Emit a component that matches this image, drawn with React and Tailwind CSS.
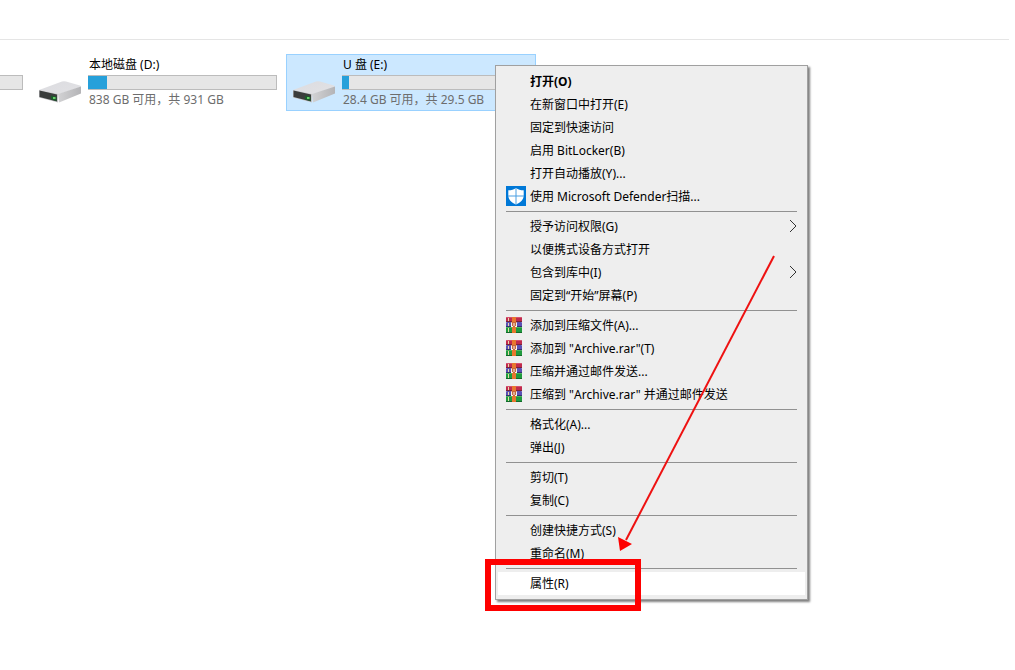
const drives = [
  { name: "本地磁盘 (D:)", info: "838 GB 可用，共 931 GB", used: 10 },
  { name: "U 盘 (E:)", info: "28.4 GB 可用，共 29.5 GB", used: 4, selected: true },
];

const menuGroups = [
  [
    { label: "打开(O)", bold: true },
    { label: "在新窗口中打开(E)" },
    { label: "固定到快速访问" },
    { label: "启用 BitLocker(B)" },
    { label: "打开自动播放(Y)..." },
    { label: "使用 Microsoft Defender扫描...", icon: "defender" },
  ],
  [
    { label: "授予访问权限(G)", submenu: true },
    { label: "以便携式设备方式打开" },
    { label: "包含到库中(I)", submenu: true },
    { label: "固定到“开始”屏幕(P)" },
  ],
  [
    { label: "添加到压缩文件(A)...", icon: "rar" },
    { label: '添加到 "Archive.rar"(T)', icon: "rar" },
    { label: "压缩并通过邮件发送...", icon: "rar" },
    { label: '压缩到 "Archive.rar" 并通过邮件发送', icon: "rar" },
  ],
  [{ label: "格式化(A)..." }, { label: "弹出(J)" }],
  [{ label: "剪切(T)" }, { label: "复制(C)" }],
  [{ label: "创建快捷方式(S)" }, { label: "重命名(M)" }],
  [{ label: "属性(R)", active: true }],
];

const DriveIcon = () => (
  <svg viewBox="0 0 44 26" className="h-[26px] w-11 shrink-0" aria-hidden="true">
    <defs>
      <linearGradient id="driveTop" x1="0" y1="0" x2="1" y2="1">
        <stop offset="0" stopColor="#dcdce0" />
        <stop offset="1" stopColor="#e2e2e5" />
      </linearGradient>
      <linearGradient id="driveSide" x1="0" y1="0" x2="1" y2="0">
        <stop offset="0" stopColor="#d2d2d4" />
        <stop offset="1" stopColor="#b4b4b7" />
      </linearGradient>
    </defs>
    <path d="M1 11 24 2.500Q26 2 28 2.500L42 6.500Q43.500 7 42.500 8L20 15.500Z" fill="url(#driveTop)" />
    <path d="M20 15 43 7.500V14.500L21 23.500Z" fill="url(#driveSide)" />
    <path d="M1 11 20 15V23.500L1 18.500Z" fill="#c6c6c8" />
    <path d="M1.500 11.500 19 15.500V22.500L1.500 18Z" fill="#3a3d3c" />
    <path d="M13 16.500 18.500 18V22L13 20.500Z" fill="#1c5a2c" />
    <rect x="15" y="18" width="2.500" height="2" fill="#63cf66" />
  </svg>
);

const DefenderIcon = () => (
  <svg viewBox="0 0 20 20" className="size-5" aria-hidden="true">
    <rect width="20" height="20" fill="#0078d7" />
    <path
      d="M10 2C8 3.600 5.500 4.300 2.300 4.300V9.500C2.300 13.800 5.800 16.600 10 18.500C14.200 16.600 17.700 13.800 17.700 9.500V4.300C14.500 4.300 12 3.600 10 2Z"
      fill="#fff"
    />
    <path d="M10 2V18.500M2 10H18" stroke="#4a9fe2" strokeWidth="1" />
  </svg>
);

const RarIcon = () => (
  <svg viewBox="0 0 16 16" className="size-4" aria-hidden="true">
    <rect width="16" height="5" rx="1" fill="#c02a4d" />
    <path d="M1 .5H15" stroke="#d9506c" />
    <path d="M0 4.500H16" stroke="#7b2138" />
    <rect y="5" width="16" height="5" rx="1" fill="#5a50b4" />
    <path d="M0 9.500H16" stroke="#343070" />
    <rect y="10" width="16" height="6" rx="1" fill="#1f9a3e" />
    <path d="M1 10.500H15" stroke="#4cb75c" />
    <path d="M0 15.500H16" stroke="#14682a" />
    {/* Book spines */}
    <path d="M2.500 1V4M2.500 6V9M2.500 11V15" stroke="#e6d9a8" />
    {/* Belt with its buckle */}
    <rect x="6" width="4" height="16" fill="#e8772e" />
    <path d="M5 5H11V10H5Z" fill="#c8683c" />
    <path d="M5.500 10V5.500M10.500 10V5.500M8 6V9" fill="none" stroke="#f8f4ec" />
    <path d="M5 9.500H7M9 9.500H11" stroke="#f8f4ec" />
  </svg>
);

const Drive = ({ drive }) => (
  <div
    className={`flex w-[250px] shrink-0 border pl-[5px] ${
      drive.selected ? "border-[#99d1ff] bg-[#cce8ff]" : "border-transparent"
    }`}
  >
    <div className="pt-6">
      <DriveIcon />
    </div>
    <div className="ml-1.5 w-[189px]">
      <div className="h-5 pl-px leading-5 text-black">{drive.name}</div>
      <div
        role="progressbar"
        aria-label={drive.name}
        aria-valuenow={drive.used}
        className="h-[15px] border border-[#bcbcbc] bg-[#e6e6e6]"
      >
        <div className="-ml-px h-full bg-[#26a0da]" style={{ width: `${drive.used}%` }} />
      </div>
      <div className="h-5 pl-px leading-5 whitespace-nowrap text-[#6d6d6d]">{drive.info}</div>
    </div>
  </div>
);

const MenuItem = ({ item }) => (
  <button
    type="button"
    role="menuitem"
    className={`relative flex h-[23px] w-full items-center px-2 text-left whitespace-nowrap ${
      item.bold ? "font-bold" : ""
    } ${item.active ? "bg-white" : "hover:bg-white"}`}
  >
    <span className="w-6 shrink-0 pb-0.5">
      {item.icon === "defender" && <DefenderIcon />}
      {item.icon === "rar" && <RarIcon />}
    </span>
    <span className="flex-1">{item.label}</span>
    {item.submenu && (
      <span className="pb-0.5">
        <svg viewBox="0 0 8 14" className="h-3.5 w-2" fill="none" stroke="#333" aria-hidden="true">
          <path d="M1 1 7 7 1 13" />
        </svg>
      </span>
    )}
    {/* Highlight frame */}
    {item.active && (
      <span className="pointer-events-none absolute -top-[13px] -left-[13px] h-[52px] w-[156px] border-6 border-[#fe0000]" />
    )}
  </button>
);

const ContextMenu = () => (
  <div
    role="menu"
    className="absolute top-[65px] left-[495px] w-[313px] border border-[#a0a0a0] bg-[#eeeeee] px-0.5 py-1 text-black shadow-[2px_2px_2px_rgba(0,0,0,0.5)]"
  >
    {menuGroups.map((group, i) => (
      <div key={i}>
        {i > 0 && <div role="separator" className="mx-2 my-[3px] h-px bg-[#919191]" />}
        {group.map((item) => (
          <MenuItem key={item.label} item={item} />
        ))}
      </div>
    ))}
    {/* Arrow to the last entry */}
    <svg
      viewBox="0 0 160 300"
      className="pointer-events-none absolute top-[188px] left-[121px] h-[300px] w-40"
      aria-hidden="true"
    >
      <path d="M157 2 9 286" stroke="#ee1111" strokeWidth="2" />
      <path d="M1 283 15 290 3 297Z" fill="#fe0000" />
    </svg>
  </div>
);

export default function App() {
  return (
    <main className="relative min-h-screen overflow-hidden bg-white font-['Noto_Sans','Noto_Sans_CJK_SC',sans-serif] text-[12px]">
      <header className="mr-1.5 h-10 border-b border-[#e5e5e5]" />
      <section className="mt-3.5 flex gap-1">
        {/* Drive that is scrolled out on the left */}
        <div className="w-7 shrink-0 pt-[21px]">
          <div className="h-[15px] w-[23px] border border-l-0 border-[#bcbcbc] bg-[#e6e6e6]" />
        </div>
        {drives.map((drive) => (
          <Drive key={drive.name} drive={drive} />
        ))}
      </section>
      <ContextMenu />
    </main>
  );
}
